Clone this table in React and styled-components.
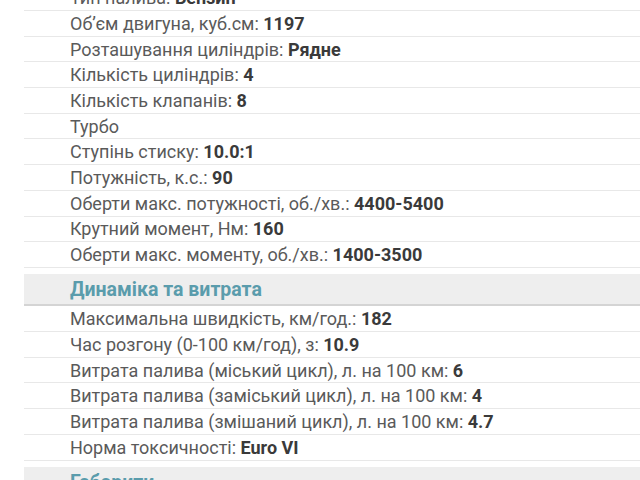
import React from "react";
import styled, { createGlobalStyle } from "styled-components";

const Global = createGlobalStyle`
  html, body { margin: 0; padding: 0; background: #fff; overflow: hidden; }
  body { font-family: Roboto, "Noto Sans", sans-serif; }
`;

const Page = styled.div`
  margin-top: -14.7px;
  padding-left: 24px;
  display: flex;
  flex-direction: column;
`;

const Section = styled.section`
  display: flex;
  flex-direction: column;
  margin-bottom: 6.5px;
`;

const Header = styled.h3`
  margin: 0;
  height: 30px;
  display: flex;
  align-items: center;
  padding-left: 46px;
  background: #eeeeee;
  border-bottom: 2px solid #d4d4d4;
  color: #5a9cac;
  font-size: 19.5px;
  font-weight: 700;
  white-space: nowrap;
`;

const Row = styled.div`
  height: 24.7px;
  display: flex;
  align-items: center;
  padding-left: 46px;
  border-bottom: 1px solid #e8e8e8;
  color: #5a5a5a;
  font-size: 18px;
  white-space: nowrap;
`;

const Value = styled.b`
  color: #3a3a3a;
  font-weight: 700;
`;

const sections = [
  {
    title: null,
    rows: [
      ["Тип палива", "Бензин"],
      ["Об\u2019єм двигуна, куб.см", "1197"],
      ["Розташування циліндрів", "Рядне"],
      ["Кількість циліндрів", "4"],
      ["Кількість клапанів", "8"],
      ["Турбо", null],
      ["Ступінь стиску", "10.0:1"],
      ["Потужність, к.с.", "90"],
      ["Оберти макс. потужності, об./хв.", "4400-5400"],
      ["Крутний момент, Нм", "160"],
      ["Оберти макс. моменту, об./хв.", "1400-3500"],
    ],
  },
  {
    title: "Динаміка та витрата",
    rows: [
      ["Максимальна швидкість, км/год.", "182"],
      ["Час розгону (0-100 км/год), з", "10.9"],
      ["Витрата палива (міський цикл), л. на 100 км", "6"],
      ["Витрата палива (заміський цикл), л. на 100 км", "4"],
      ["Витрата палива (змішаний цикл), л. на 100 км", "4.7"],
      ["Норма токсичності", "Euro VI"],
    ],
  },
  { title: "Габарити", rows: [] },
];

export default function App() {
  return (
    <>
      <Global />
      <Page>
        {sections.map((s, i) => (
          <Section key={i}>
            {s.title && <Header>{s.title}</Header>}
            {s.rows.map(([label, value], j) => (
              <Row key={j}>
                {value === null ? (
                  label
                ) : (
                  <span>
                    {label}: <Value>{value}</Value>
                  </span>
                )}
              </Row>
            ))}
          </Section>
        ))}
      </Page>
    </>
  );
}
